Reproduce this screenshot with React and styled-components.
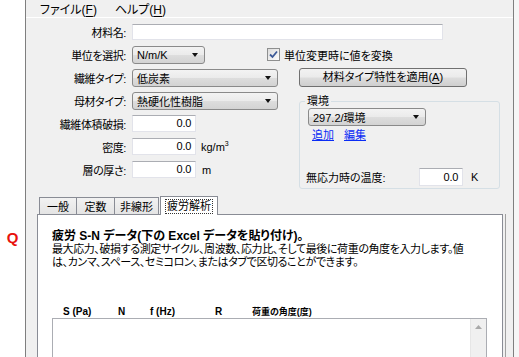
import React from "react";
import styled, { createGlobalStyle } from "styled-components";

const Global = createGlobalStyle`
  html, body { margin: 0; padding: 0; background: #fff; overflow: hidden; }
  body {
    font-family: "Liberation Sans", "Noto Sans CJK JP", sans-serif;
    font-size: 11px;
    font-feature-settings: "palt";
    color: #000;
  }
`;

const Page = styled.div`
  display: flex;
  height: 357px;
`;

const Gutter = styled.div`
  width: 25px;
  flex: none;
  padding-top: 229px;
  box-sizing: border-box;
  text-align: center;
`;

const Marker = styled.span`
  color: #e8120c;
  font-weight: bold;
  font-size: 15px;
  font-family: "Liberation Sans", sans-serif;
`;

const Window = styled.div`
  width: 487px;
  flex: none;
  background: #f0f0f0;
  border-left: 1px solid #7f7f7f;
  border-right: 1px solid #7f7f7f;
  display: flex;
  flex-direction: column;
  overflow: hidden;
`;

const Edge = styled.div`
  flex: 1;
  background: #f6f6f6;
`;

const MenuBar = styled.div`
  height: 20px;
  display: flex;
  align-items: center;
  gap: 18px;
  padding-left: 14px;
  border-bottom: 1px solid #fff;
  font-size: 12px;
`;

const Key = styled.u`
  text-underline-offset: 2px;
`;

const Form = styled.div`
  padding-top: 2px;
`;

const Row = styled.div`
  display: flex;
  align-items: center;
  height: 23px;
`;

const Label = styled.span`
  width: 100px;
  margin-right: 6px;
  text-align: right;
  white-space: nowrap;
  letter-spacing: -0.4px;
`;

const TextBox = styled.div`
  box-sizing: border-box;
  width: ${p => p.$w}px;
  height: ${p => p.$h || 17}px;
  background: #fff;
  border: 1px solid #e2e3ea;
  border-top-color: #abadb3;
  text-align: right;
  padding-right: 4px;
  line-height: ${p => (p.$h || 17) - 2}px;
  letter-spacing: -0.3px;
`;

const Combo = styled.div`
  box-sizing: border-box;
  width: ${p => p.$w}px;
  height: 18px;
  border: 1px solid #8a8a8a;
  border-radius: 3px;
  background: linear-gradient(#f3f3f3 0%, #ebebeb 48%, #dddddd 52%, #d3d3d3 100%);
  display: flex;
  align-items: center;
  justify-content: space-between;
  padding: 0 6px 0 4px;
  margin-left: ${p => p.$ml || 0}px;
`;

const Arrow = styled.span`
  width: 0;
  height: 0;
  border-left: 3.5px solid transparent;
  border-right: 3.5px solid transparent;
  border-top: 4px solid #111;
`;

const Check = styled.label`
  display: flex;
  align-items: center;
  gap: 4px;
  margin-left: 62px;
`;

const Box = styled.span`
  width: 11px;
  height: 11px;
  border: 1px solid #8e8f8f;
  background: linear-gradient(135deg, #dcdcdc, #fdfdfd);
  display: flex;
  align-items: center;
  justify-content: center;
`;

const Button = styled.div`
  box-sizing: border-box;
  width: 168px;
  height: 19px;
  margin-left: 21px;
  border: 1px solid #707070;
  border-radius: 3px;
  background: linear-gradient(#f2f2f2 0%, #ebebeb 48%, #dddddd 52%, #cfcfcf 100%);
  text-align: center;
  line-height: 17px;
`;

const Unit = styled.span`
  margin-left: ${p => p.$ml || 5}px;
`;

const Lower = styled.div`
  display: flex;
  align-items: flex-start;
`;

const LeftCol = styled.div`
  width: 273px;
  flex: none;
`;

const Group = styled.fieldset`
  box-sizing: border-box;
  width: 201px;
  margin: 5px 0 0 0;
  padding: 0 6px 2px 6px;
  border: 1px solid #d5dfe5;
  border-radius: 3px;
  display: flex;
  flex-direction: column;
`;

const Legend = styled.legend`
  padding: 0 2px;
  margin-left: -1px;
  line-height: 14px;
`;

const Links = styled.div`
  display: flex;
  gap: 10px;
  margin: 2px 0 0 6px;
  line-height: 14px;
`;

const Link = styled.a`
  color: #0a2cf5;
  text-decoration: underline;
`;

const TempRow = styled.div`
  display: flex;
  align-items: center;
  margin-top: 26px;
`;

const TempLabel = styled.span`
  width: 113px;
`;

const Tabs = styled.div`
  display: flex;
  align-items: flex-end;
  margin: 7px 0 0 13px;
  position: relative;
  z-index: 1;
  height: 19px;
`;

const Tab = styled.div`
  box-sizing: border-box;
  width: ${p => p.$w}px;
  height: ${p => (p.$active ? 19 : 17)}px;
  margin-left: ${p => (p.$active ? 1 : 0)}px;
  margin-bottom: ${p => (p.$active ? -1 : 0)}px;
  border: 1px solid #898c95;
  border-left-width: ${p => (p.$first || p.$active ? 1 : 0)}px;
  border-bottom: none;
  background: ${p =>
    p.$active ? "#fff" : "linear-gradient(#f2f2f2, #e4e4e4)"};
  display: flex;
  align-items: center;
  justify-content: center;
`;

const Focus = styled.span`
  outline: 1px dotted #333;
  outline-offset: 0;
  padding: 0 1px;
  line-height: 13px;
`;

const Panel = styled.div`
  margin: 0 10px 0 11px;
  flex: 1;
  background: #fff;
  border: 1px solid #898c95;
  box-shadow: 2px 0 0 #f0f0f0, 3px 0 0 #a0a0a0;
  padding: 14px 0 0 14px;
`;

const Heading = styled.div`
  font-weight: bold;
  font-size: 12px;
  line-height: 14px;
`;

const Text = styled.div`
  line-height: 13px;
  width: 418px;
  letter-spacing: -0.4px;
`;

const Columns = styled.div`
  display: flex;
  margin: 37px 0 0 11px;
  font-weight: bold;
  font-size: 10px;
  line-height: 12px;
`;

const Col = styled.span`
  width: ${p => p.$w}px;
  flex: none;
  font-size: ${p => p.$fs || 10}px;
`;

const Grid = styled.div`
  box-sizing: border-box;
  width: 435px;
  height: 60px;
  border: 1px solid #abadb3;
  display: flex;
  justify-content: flex-end;
`;

const Scroll = styled.div`
  width: 16px;
  background: #f0f0f0;
  border-left: 1px solid #e6e6e6;
  display: flex;
  justify-content: center;
  padding-top: 6px;
  box-sizing: border-box;
`;

const CheckMark = () => (
  <svg width="9" height="9" viewBox="0 0 9 9">
    <path d="M1 4.5 L3.5 7 L8 1.5" fill="none" stroke="#3d5a98" strokeWidth="1.8" />
  </svg>
);

const UpArrow = () => (
  <svg width="7" height="4" viewBox="0 0 7 4">
    <path d="M0 4 L3.5 0 L7 4 Z" fill="#a9a9a9" />
  </svg>
);

export default function App() {
  return (
    <>
      <Global />
      <Page>
        <Gutter>
          <Marker>Q</Marker>
        </Gutter>
        <Window>
          <MenuBar>
            <span>
              ファイル(<Key>F</Key>)
            </span>
            <span>
              ヘルプ(<Key>H</Key>)
            </span>
          </MenuBar>

          <Form>
            <Row>
              <Label>材料名:</Label>
              <TextBox $w={311} $h={16} />
            </Row>
            <Row>
              <Label>単位を選択:</Label>
              <Combo $w={73}>
                N/m/K
                <Arrow />
              </Combo>
              <Check>
                <Box>
                  <CheckMark />
                </Box>
                単位変更時に値を変換
              </Check>
            </Row>
            <Row>
              <Label>繊維タイプ:</Label>
              <Combo $w={146}>
                低炭素
                <Arrow />
              </Combo>
              <Button>
                材料タイプ特性を適用(<Key>A</Key>)
              </Button>
            </Row>

            <Lower>
              <LeftCol>
                <Row>
                  <Label>母材タイプ:</Label>
                  <Combo $w={146}>
                    熱硬化性樹脂
                    <Arrow />
                  </Combo>
                </Row>
                <Row>
                  <Label>繊維体積破損:</Label>
                  <TextBox $w={64}>0.0</TextBox>
                </Row>
                <Row>
                  <Label>密度:</Label>
                  <TextBox $w={64}>0.0</TextBox>
                  <Unit>
                    kg/m<sup style={{ fontSize: 7 }}>3</sup>
                  </Unit>
                </Row>
                <Row>
                  <Label>層の厚さ:</Label>
                  <TextBox $w={64}>0.0</TextBox>
                  <Unit $ml={6}>m</Unit>
                </Row>
              </LeftCol>

              <Group>
                <Legend>環境</Legend>
                <Combo $w={118} $ml={2}>
                  297.2/環境
                  <Arrow />
                </Combo>
                <Links>
                  <Link>追加</Link>
                  <Link>編集</Link>
                </Links>
                <TempRow>
                  <TempLabel>無応力時の温度:</TempLabel>
                  <TextBox $w={44} $h={18}>0.0</TextBox>
                  <Unit $ml={8}>K</Unit>
                </TempRow>
              </Group>
            </Lower>
          </Form>

          <Tabs>
            <Tab $w={38} $first>一般</Tab>
            <Tab $w={38}>定数</Tab>
            <Tab $w={44}>非線形</Tab>
            <Tab $w={58} $active>
              <Focus>疲労解析</Focus>
            </Tab>
          </Tabs>
          <Panel>
            <Heading>疲労 S-N データ(下の Excel データを貼り付け)。</Heading>
            <Text>
              最大応力、破損する測定サイクル、周波数、応力比、そして最後に荷重の角度を入力します。値は、カンマ、スペース、セミコロン、またはタブで区切ることができます。
            </Text>
            <Columns>
              <Col $w={55}>S (Pa)</Col>
              <Col $w={32}>N</Col>
              <Col $w={65}>f (Hz)</Col>
              <Col $w={37}>R</Col>
              <Col $w={90} $fs={9}>荷重の角度(度)</Col>
            </Columns>
            <Grid>
              <Scroll>
                <UpArrow />
              </Scroll>
            </Grid>
          </Panel>
        </Window>
        <Edge />
      </Page>
    </>
  );
}
